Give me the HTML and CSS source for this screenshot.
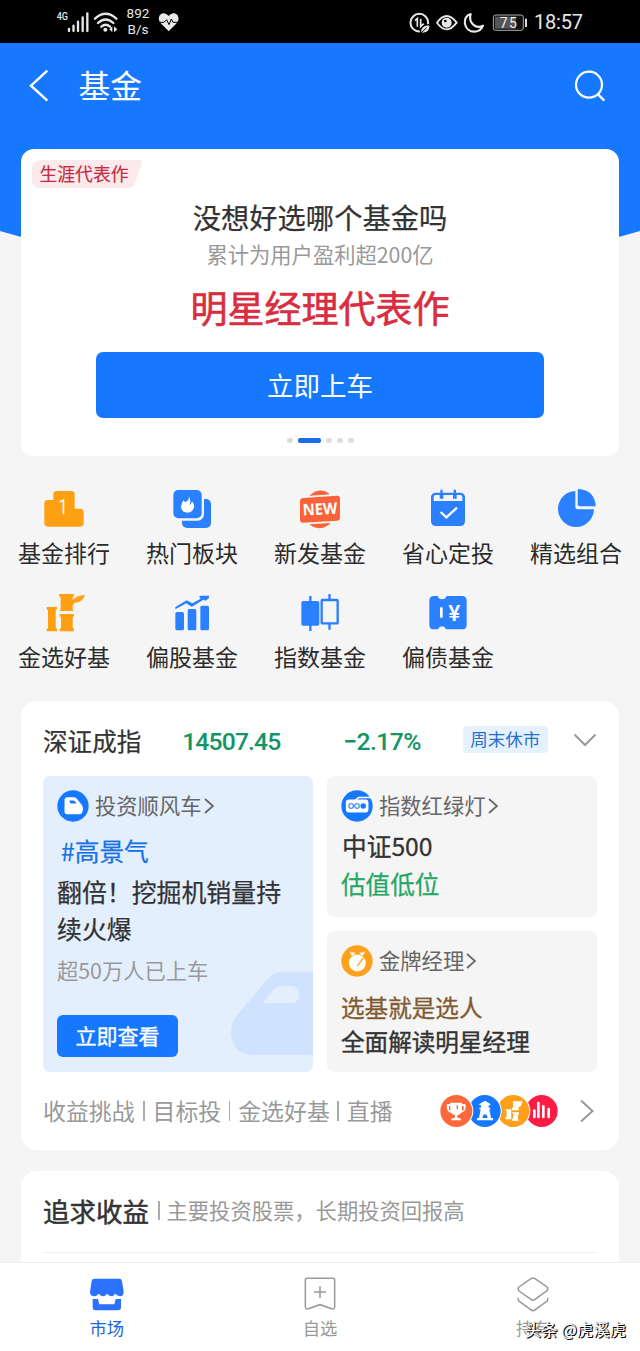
FILE: index.html
```html
<!DOCTYPE html>
<html lang="zh-CN">
<head>
<meta charset="utf-8">
<title>基金</title>
<link rel="stylesheet" href="styles.css">
</head>
<body>
<div class="app">
  <div class="status">
    <svg class="status-net" viewBox="165 24 195 84" width="65" height="28">
      <text x="170" y="57" font-size="31" font-weight="500" textLength="34" lengthAdjust="spacingAndGlyphs" fill="#e8e8e8">4G</text>
      <g stroke="#e8e8e8" stroke-width="7" stroke-linecap="round">
        <path d="M207 84V90M220.500 74V90M234 62V90M248 49V90M262 37V90"/>
      </g>
      <g fill="none" stroke="#e8e8e8" stroke-width="7" stroke-linecap="round">
        <path d="M285 53Q317 24 349 53M294 66Q317 45 340 66M304 77Q317 66 330 77"/>
      </g>
      <circle cx="316" cy="86" r="6" fill="#e8e8e8"/>
      <path d="M337 76V94L328 85ZM342 76V94L352 85Z" fill="#e8e8e8"/>
    </svg>
    <div class="speed"><span>892</span><span>B/s</span></div>
    <svg class="status-heart" viewBox="474 34 66 60" width="22" height="20">
      <path d="M506 92L482 68C466 48 488 25 506 46C524 25 546 48 530 68Z" fill="#e8e8e8"/>
      <path d="M474 65H492L500 57L507 72L514 55L519 65H540" fill="none" stroke="#000" stroke-width="3"/>
    </svg>
    <svg class="status-right" viewBox="264 30 366 69" width="122" height="23">
      <circle cx="298" cy="65" r="26.500" fill="none" stroke="#e8e8e8" stroke-width="6"/>
      <path d="M285 59L292 53V77M302 53V77L311 68" fill="none" stroke="#e8e8e8" stroke-width="5"/>
      <path d="M302 97Q298 72 330 71V80Q326 99 302 97Z" fill="#e8e8e8" stroke="#000" stroke-width="4"/>
      <path d="M303 96L320 80" stroke="#000" stroke-width="3"/>
      <path d="M351 65Q380 25 410 65Q380 105 351 65Z" fill="none" stroke="#e8e8e8" stroke-width="5.500"/>
      <circle cx="380" cy="65" r="15" fill="#e8e8e8"/><circle cx="376" cy="60" r="4" fill="#000"/>
      <path d="M452 39C424 46 430 93 465 92Q482 91 489 74C468 85 444 66 452 39Z" fill="none" stroke="#e8e8e8" stroke-width="6.500" stroke-linejoin="round"/>
      <rect x="520" y="42" width="90" height="46" rx="7" fill="#111" stroke="#aaa" stroke-width="3"/>
      <rect x="525" y="47" width="62" height="36" fill="#555"/>
      <path d="M618 53V78" stroke="#ddd" stroke-width="6"/>
      <text x="565" y="80" text-anchor="middle" font-size="42" font-weight="400" textLength="51" fill="#eee">75</text>
    </svg>
    <span class="clock">18:57</span>
  </div>

  <div class="hero">
    <div class="header">
      <svg viewBox="84 201 66 105" width="22" height="35"><path d="M142 209L93 254L142 299" fill="none" stroke="#fff" stroke-width="7.500"/></svg>
      <h1>基金</h1>
      <svg class="search" viewBox="759 201 105 105" width="35" height="35"><circle cx="807" cy="251" r="39" fill="none" stroke="#fff" stroke-width="6.500"/><path d="M834 280L853 299" stroke="#fff" stroke-width="7"/></svg>
    </div>
    <div class="banner">
      <svg class="ribbon" viewBox="0 0 110 29" width="110" height="29"><path d="M10 0H107Q111 0 109.500 4L103 23Q101 28 95 28H8Q0 28 0 20V10Q0 0 10 0Z" fill="#fce9eb"/><text x="7.500" y="21" font-size="17.800" textLength="89" fill="#c52a40" stroke="#c52a40" stroke-width=".15">生涯代表作</text></svg>
      <div class="banner-title">没想好选哪个基金吗</div>
      <div class="banner-sub">累计为用户盈利超200亿</div>
      <div class="banner-main">明星经理代表作</div>
      <div class="banner-btn">立即上车</div>
      <div class="dots"><i></i><i class="on"></i><i></i><i></i><i></i></div>
    </div>
  </div>

  <div class="grid">
    <div class="entry">
      <svg viewBox="129 24 126 126"><path d="M143 60H160V43Q160 33 170 33H214Q224 33 224 43V86H240Q251 86 251 97V130Q251 140 240 140H144Q133 140 133 130V70Q133 60 143 60Z" fill="#ffa013"/><text x="189" y="102" text-anchor="middle" font-size="62" fill="#fff" class="num" textLength="26" lengthAdjust="spacingAndGlyphs">1</text></svg>
      <span>基金排行</span>
    </div>
    <div class="entry">
      <svg viewBox="513 24 126 126"><rect x="546" y="57" width="87" height="87" rx="15" fill="#2a80fe"/><rect x="514" y="24" width="98" height="98" rx="19" fill="#f5f5f5"/><rect x="520" y="30" width="85" height="85" rx="15" fill="#2a80fe"/><path d="M566 48Q569 57 562 63Q556 67 553 66Q554 62 551 61Q543 71 543 80Q545 98 563 98Q580 96 582 80Q582 70 576 64Q574 72 569 75Q574 59 566 48Z" fill="#fff"/></svg>
      <span>热门板块</span>
    </div>
    <div class="entry">
      <svg viewBox="-63 24 126 126"><path d="M-32 50Q0 16 32 46L34 126Q1 160 -34 128Z" fill="#fb6239"/><path d="M-66 48L66 39V128L-66 137Z" fill="#f5f5f5"/><path d="M-32 47Q0 18 30 43ZM-32 133Q1 158 32 129Z" fill="#fb6239"/><path d="M-50 54L51 47Q60 47 60 55V114Q60 121 52 122L-51 128Q-60 128 -60 120V63Q-60 55 -50 54Z" fill="#fb6239"/><text x="0" y="104" text-anchor="middle" font-size="48" font-weight="700" fill="#fff" class="new" textLength="104" lengthAdjust="spacingAndGlyphs" transform="rotate(-3 0 90)">NEW</text></svg>
      <span>新发基金</span>
    </div>
    <div class="entry">
      <svg viewBox="321 24 126 126"><rect x="333" y="38" width="102" height="100" rx="14" fill="#2a80fe"/><path d="M341 63V51Q341 45 347 45H359V56H370V45H399V56H410V45H421Q427 45 427 51V63Z" fill="#f5f5f5"/><path d="M364.500 32V51M404.500 32V51" stroke="#2a80fe" stroke-width="7" stroke-linecap="round"/><path d="M362 96L379 112L411 83" fill="none" stroke="#fff" stroke-width="7"/></svg>
      <span>省心定投</span>
    </div>
    <div class="entry">
      <svg viewBox="705 24 126 126"><path d="M766 33V80Q766 88 774 88H822A54 54 0 1 1 766 33Z" fill="#2a80fe"/><path d="M773 29Q773 27 778 27Q825 33 827 79H780Q773 79 773 73Z" fill="#2a80fe"/></svg>
      <span>精选组合</span>
    </div>
    <div class="entry">
      <svg viewBox="129 336 126 126"><g fill="#ffa013"><path d="M140 381H171V386L167 392V442L171 448V454H140V448L144 443V392L140 387Z"/><path d="M177 342H222V347L218 352V359L235 348L255 345Q249 366 223 369L218 377V389L222 393H179L182 388V353L177 347Z"/><path d="M179 402H222V407L218 413V442L222 448V454H179V448L183 443V413L179 408Z"/></g></svg>
      <span>金选好基</span>
    </div>
    <div class="entry">
      <svg viewBox="513 336 126 126"><g fill="#2a80fe"><rect x="526" y="396" width="26" height="55" rx="5"/><rect x="563" y="387" width="26" height="64" rx="5"/><rect x="601" y="377" width="26" height="74" rx="5"/><path d="M526 381L560 361L577 370L602 356L597 350L602 347H627V354L617 362L610 359L580 378Q576 381 571 378L559 370L526 388Z"/></g></svg>
      <span>偏股基金</span>
    </div>
    <div class="entry">
      <svg viewBox="-63 336 126 126"><rect x="-56" y="363" width="54" height="74" rx="5" fill="#2a80fe"/><path d="M-29 348V453M28.500 342V359M28.500 432V449" stroke="#2a80fe" stroke-width="7"/><rect x="5" y="360" width="48" height="70" rx="2" fill="none" stroke="#2a80fe" stroke-width="7"/></svg>
      <span>指数基金</span>
    </div>
    <div class="entry">
      <svg viewBox="321 336 126 126"><path d="M342 348H353Q356 358 366 358Q376 358 380 348H426Q440 348 440 362V434Q440 448 426 448H378Q374 439 366 439Q358 439 354 448H342Q328 448 328 434V362Q328 348 342 348Z" fill="#2a80fe"/><path d="M364 382V413" stroke="#fff" stroke-width="8"/><text x="403" y="422" text-anchor="middle" font-size="64" font-weight="500" fill="#fff" class="num" textLength="36" lengthAdjust="spacingAndGlyphs">¥</text></svg>
      <span>偏债基金</span>
    </div>
  </div>

  <div class="card market">
    <div class="index">
      <span class="index-name">深证成指</span>
      <span class="index-value">14507.45</span>
      <span class="index-change">−2.17%</span>
      <span class="index-tag">周末休市</span>
      <svg viewBox="0 0 24 16" width="24" height="16"><path d="M1.500 2.500L12 13L22.500 2.500" fill="none" stroke="#999" stroke-width="2"/></svg>
    </div>
    <div class="tiles">
      <div class="tile ride">
        <svg class="car" viewBox="632 155 247 249" width="82" height="83"><path d="M879 155H780Q760 155 746 172L649 286Q632 306 632 338Q636 400 692 404H879Z" fill="#cfe3fe"/><path d="M728 248L760 208Q768 197 780 197H816Q838 201 838 222Q838 245 816 248Z" fill="#e4effe"/></svg>
        <div class="tile-head">
          <svg viewBox="110 268 98 98" width="32" height="32"><circle cx="159" cy="317" r="48" fill="#1677ff"/><path d="M142 290H162Q167 290 171 295L186 314Q193 325 186 339Q184 342 178 342H141Q133 342 133 334V299Q133 290 142 290Z" fill="#fff"/><path d="M148 300H161Q164 300 170 309H154Q148 308 148 300Z" fill="#1677ff"/></svg>
          <span>投资顺风车</span>
          <svg viewBox="0 0 10 16" width="10" height="16"><path d="M1 1L9 8L1 15" fill="none" stroke="#666" stroke-width="1.800"/></svg>
        </div>
        <div class="topic">#高景气</div>
        <div class="headline">翻倍！挖掘机销量持<br>续火爆</div>
        <div class="riders">超50万人已上车</div>
        <div class="look">立即查看</div>
      </div>
      <div class="tile">
        <div class="tile-head">
          <svg viewBox="63 268 98 98" width="32" height="32"><circle cx="112" cy="317" r="48" fill="#1677ff"/><path d="M108 298L117 291H159" fill="none" stroke="#fff" stroke-width="5"/><rect x="78" y="297" width="69" height="40" rx="9" fill="#fff"/><g fill="none" stroke="#4a91f5" stroke-width="4"><circle cx="94" cy="317" r="7"/><circle cx="112" cy="317" r="7"/></g><circle cx="131" cy="317" r="8.500" fill="#1677ff"/></svg>
          <span>指数红绿灯</span>
          <svg viewBox="0 0 10 16" width="10" height="16"><path d="M1 1L9 8L1 15" fill="none" stroke="#666" stroke-width="1.800"/></svg>
        </div>
        <div class="csi">中证500</div>
        <div class="low">估值低位</div>
      </div>
      <div class="tile manager">
        <div class="tile-head">
          <svg viewBox="63 72 98 98" width="32" height="32"><circle cx="112" cy="121" r="48" fill="#ffa01c"/><circle cx="113" cy="127" r="26" fill="#fff"/><path d="M88 92L108 95Q103 107 95 106Z M138 92L118 95Q123 107 131 106Z" fill="#fff" stroke="#ffa01c" stroke-width="2"/><path d="M113 137L132 111" stroke="#ffa01c" stroke-width="4"/></svg>
          <span>金牌经理</span>
          <svg viewBox="0 0 10 16" width="10" height="16"><path d="M1 1L9 8L1 15" fill="none" stroke="#666" stroke-width="1.800"/></svg>
        </div>
        <div class="pick">选基就是选人</div>
        <div class="read">全面解读明星经理</div>
      </div>
    </div>
    <div class="more">
      <span>收益挑战</span><i></i><span>目标投</span><i></i><span>金选好基</span><i></i><span>直播</span>
      <svg class="badges" viewBox="357 519 360 108" width="120" height="36">
        <circle cx="665" cy="573" r="48" fill="#fe1b44"/><path d="M643 572V591M655 549V591M670 559V591M686 567V591" stroke="#fff" stroke-width="8" stroke-linecap="round"/>
        <circle cx="580" cy="573" r="51" fill="#fff"/><circle cx="580" cy="573" r="48" fill="#ffa01c"/><path d="M558 568H574V598H556V592L560 590V573L556 570ZM578 544H608L602 559L596 561V571H576V565L579 562V549ZM576 577H597V581L594 585V597L597 602H576V597L580 593V583Z" fill="#fff"/>
        <circle cx="494" cy="573" r="51" fill="#fff"/><circle cx="494" cy="573" r="48" fill="#1677ff"/><path d="M478 552L495 542L511 552V556H506V563H511V568H508L513 594H519V601H471V594H477L482 568H478V563H483V556H478Z" fill="#fff"/><path d="M488 594V588Q495 578 502 588V594Z" fill="#1677ff"/>
        <circle cx="409" cy="573" r="51" fill="#fff"/><circle cx="409" cy="573" r="48" fill="#fb693a"/><path d="M391 548H426V552H436Q442 572 423 579Q419 585 412 586V593Q424 594 424 601H393Q393 594 405 593V586Q398 585 394 579Q377 575 381 552H391Z" fill="#fff"/><path d="M387 558V570L391 572V558ZM426 558V572L431 570V558Z" fill="#fb693a"/><path d="M412 556V568" stroke="#fb693a" stroke-width="4"/>
      </svg>
      <svg class="go" viewBox="0 0 14 24" width="14" height="24"><path d="M1 1.500L12.500 12L1 22.500" fill="none" stroke="#999" stroke-width="2"/></svg>
    </div>
  </div>

  <div class="card pursue">
    <div class="pursue-head"><b>追求收益</b><i></i><span>主要投资股票，长期投资回报高</span></div>
  </div>

  <div class="tabs">
    <div class="tab active">
      <svg viewBox="264 380 114 114" width="38" height="38"><path d="M284 388H358Q365 388 366 395L371 427Q371 440 361 441Q352 440 346 433Q339 441 334 441Q327 440 321 433Q315 441 308 441Q302 440 296 433Q290 441 281 441Q270 439 270 428L275 395Q276 388 284 388Z" fill="#2a72fd"/><path d="M278 449H294L298 465H343L347 449H363V474Q363 483 354 483H287Q278 483 278 474Z" fill="#2a72fd"/></svg>
      <span>市场</span>
    </div>
    <div class="tab">
      <svg viewBox="-57 380 114 114" width="38" height="38"><path d="M-38 387H38Q44 387 44 393V472Q44 481 35 478L0 466L-35 478Q-44 481 -44 472V393Q-44 387 -38 387ZM-18 428H18M0 410V446" fill="none" stroke="#999" stroke-width="4.500"/></svg>
      <span>自选</span>
    </div>
    <div class="tab">
      <svg viewBox="583 380 114 114" width="38" height="38"><path d="M634 388Q640 384 646 388L682 413Q687 418 682 424L646 450Q640 455 634 450L598 425Q593 419 598 413ZM596 445V454L633 481Q640 487 647 481L684 454V445" fill="none" stroke="#999" stroke-width="4.500"/></svg>
      <span>持有</span>
    </div>
    <div class="watermark">头条 @虎溪虎</div>
  </div>
</div>
</body>
</html>
```

FILE: styles.css
```css
* { box-sizing: border-box; }
body {
  margin: 0;
  background: #f5f5f5;
  color: #333;
  font-family: "Noto Sans CJK SC", sans-serif;
}
svg { display: block; flex: none; }
i { font-style: normal; }
.app {
  width: 640px;
  height: 1351px;
  display: flex;
  flex-direction: column;
  overflow: hidden;
  white-space: nowrap;
}

/* status bar */
.status {
  height: 43px;
  flex: none;
  background: #000;
  color: #e8e8e8;
  display: flex;
  align-items: center;
  padding: 0 57px 2px 55px;
  font-family: Roboto, sans-serif;
}
.status-net { margin-top: 4px; }
.speed {
  display: flex;
  flex-direction: column;
  width: 24px;
  margin-left: 6px;
  text-align: center;
  font-size: 13.5px;
  line-height: 16px;
}
.status-heart { margin-left: 8px; margin-top: 3px; }
.status-right { margin-left: auto; margin-top: 3px; }
.clock { margin-left: 4px; width: 49px; font-size: 20px; line-height: 40px; margin-top: 3px; letter-spacing: -.2px; }

/* header and banner */
.hero { position: relative; z-index: 0; flex: none; padding: 0 21px; }
.hero::before {
  content: "";
  position: absolute;
  z-index: -1;
  inset: 0 0 auto;
  height: 220px;
  background: #1677ff;
  clip-path: polygon(0 0, 100% 0, 100% 188px, 90% 206px, 10% 206px, 0 188px);
}
.header {
  height: 106px;
  display: flex;
  align-items: center;
  padding: 0 11px 22px 7px;
  color: #fff;
}
.header h1 {
  margin: -3px 0 0 28.5px;
  font-size: 31.7px;
  line-height: 48px;
  font-weight: 400;
}
.search { margin-left: auto; }
.banner {
  height: 307px;
  border-radius: 13px;
  background: #fff;
  padding: 11px 11px 0;
  display: flex;
  flex-direction: column;
  align-items: center;
}
.ribbon { align-self: flex-start; }
.banner-title { margin-top: 8px; font-size: 28.3px; line-height: 40px; -webkit-text-stroke: .25px; }
.banner-sub { font-size: 21.3px; line-height: 34px; color: #999; }
.banner-main { margin-top: 9px; font-size: 37px; line-height: 54px; color: #d92d40; -webkit-text-stroke: .6px; }
.banner-btn {
  margin-top: 18px;
  width: 448px;
  height: 66px;
  border-radius: 7px;
  background: #1677ff;
  color: #fff;
  text-align: center;
  font-size: 26.5px;
  line-height: 65px;
}
.dots { margin-top: 20px; display: flex; gap: 5px; height: 5px; }
.dots i { width: 6px; height: 5px; border-radius: 2px; background: #dedede; }
.dots .on { width: 23px; background: #1a6fe6; border-radius: 2px; }

/* shortcuts */
.grid {
  flex: none;
  display: grid;
  grid-template-columns: repeat(5, 128px);
  grid-auto-rows: 104px;
  padding-top: 32px;
  height: 245px;
}
.entry { display: flex; flex-direction: column; align-items: center; font-size: 23px; color: #2b2b2b; }
.entry svg { width: 42px; height: 42px; }
.entry span { margin-top: 4px; line-height: 36px; }
.num { font-family: Roboto, sans-serif; }
.new { font-family: "Open Sans", sans-serif; }

/* market card */
.card { flex: none; margin: 0 21px; border-radius: 16px; background: #fff; padding: 0 22px; }
.market { height: 449px; }
.index { height: 75px; display: flex; align-items: center; padding-top: 2px; }
.index-name { width: 140px; font-size: 24.6px; -webkit-text-stroke: .25px; }
.index-value, .index-change { font: 500 24.7px/36px Roboto, sans-serif; color: #129465; letter-spacing: -.85px; padding-top: 4px; }
.index-value { width: 162px; }
.index-change { width: 118px; letter-spacing: -.55px; }
.index-tag { width: 86px; height: 27px; margin-left: 2px; background: #e6f1fe; border-radius: 4px; color: #2670d0; font-size: 17.5px; line-height: 26px; text-align: center; }
.index svg { margin-left: 25px; margin-top: 1px; }
.tiles { display: grid; grid-template: 141px 141px / 270px 270px; gap: 14px; }
.tile { border-radius: 7px; background: #f5f5f5; padding: 14px; }
.ride { grid-row: span 2; position: relative; background: #e4effe; overflow: hidden; }
.car { position: absolute; right: 0; top: 196px; }
.tile-head { display: flex; align-items: center; height: 32px; font-size: 21.3px; line-height: 32px; color: #666; }
.tile-head span { margin: -2px 2px 0 6px; }
.topic { margin: 10px 0 0 4px; font-size: 24.7px; line-height: 37px; color: #1772e8; -webkit-text-stroke: .25px; }
.headline { margin-top: 4px; font-size: 24.9px; line-height: 37px; -webkit-text-stroke: .25px; }
.riders { margin-top: 8px; font-size: 21.3px; line-height: 30px; color: #999; }
.look { margin-top: 30px; width: 121px; height: 42px; background: #1677ff; border-radius: 6px; color: #fff; text-align: center; font-size: 21px; line-height: 41px; -webkit-text-stroke: .35px; }
.csi { margin: 5px 0 0 1px; font-size: 24.7px; line-height: 37px; -webkit-text-stroke: .3px; }
.low { font-size: 24.6px; line-height: 38px; color: #25a765; -webkit-text-stroke: .25px; }
.pick { margin-top: 13px; font-size: 23.6px; line-height: 34px; color: #805a32; -webkit-text-stroke: .3px; }
.read { font-size: 23.6px; line-height: 34px; -webkit-text-stroke: .4px; }
.more { display: flex; align-items: center; height: 78px; font-size: 22.9px; color: #999; padding-right: 3px; }
.more span { margin-top: -3px; }
.more i { width: 1.5px; height: 20px; margin: 0 8px 0 8.5px; background: #aaa; }
.more i ~ i { margin: 0 8px 0 7.5px; }
.badges { margin-left: auto; }
.go { margin-left: 21px; }

/* next section */
.pursue { margin-top: 21px; height: 91px; border-radius: 16px 16px 0 0; }
.pursue-head { display: flex; align-items: center; height: 82px; padding-bottom: 2px; border-bottom: 1px solid #f2f2f2; }
.pursue-head b { font-size: 26.5px; font-weight: 400; -webkit-text-stroke: .5px; }
.pursue-head i { width: 1.5px; height: 19px; margin: 0 7px 0 9px; background: #aaa; }
.pursue-head span { font-size: 21.3px; color: #999; margin-top: -2px; }

/* bottom tabs */
.tabs {
  position: relative;
  flex: none;
  height: 89px;
  background: #fff;
  border-top: 1px solid #f0f0f0;
  display: grid;
  grid-template-columns: repeat(3, 1fr);
}
.tab { display: flex; flex-direction: column; align-items: center; padding-top: 13px; font-size: 17.3px; line-height: 28px; color: #999; }
.tab.active { color: #2167d5; }
.watermark {
  position: absolute;
  right: 14px;
  bottom: 9px;
  color: #fff;
  font-size: 16.4px;
  line-height: 26px;
  text-shadow: 1px 1px 0 #000, 1px 0 1px #222;
}
```
